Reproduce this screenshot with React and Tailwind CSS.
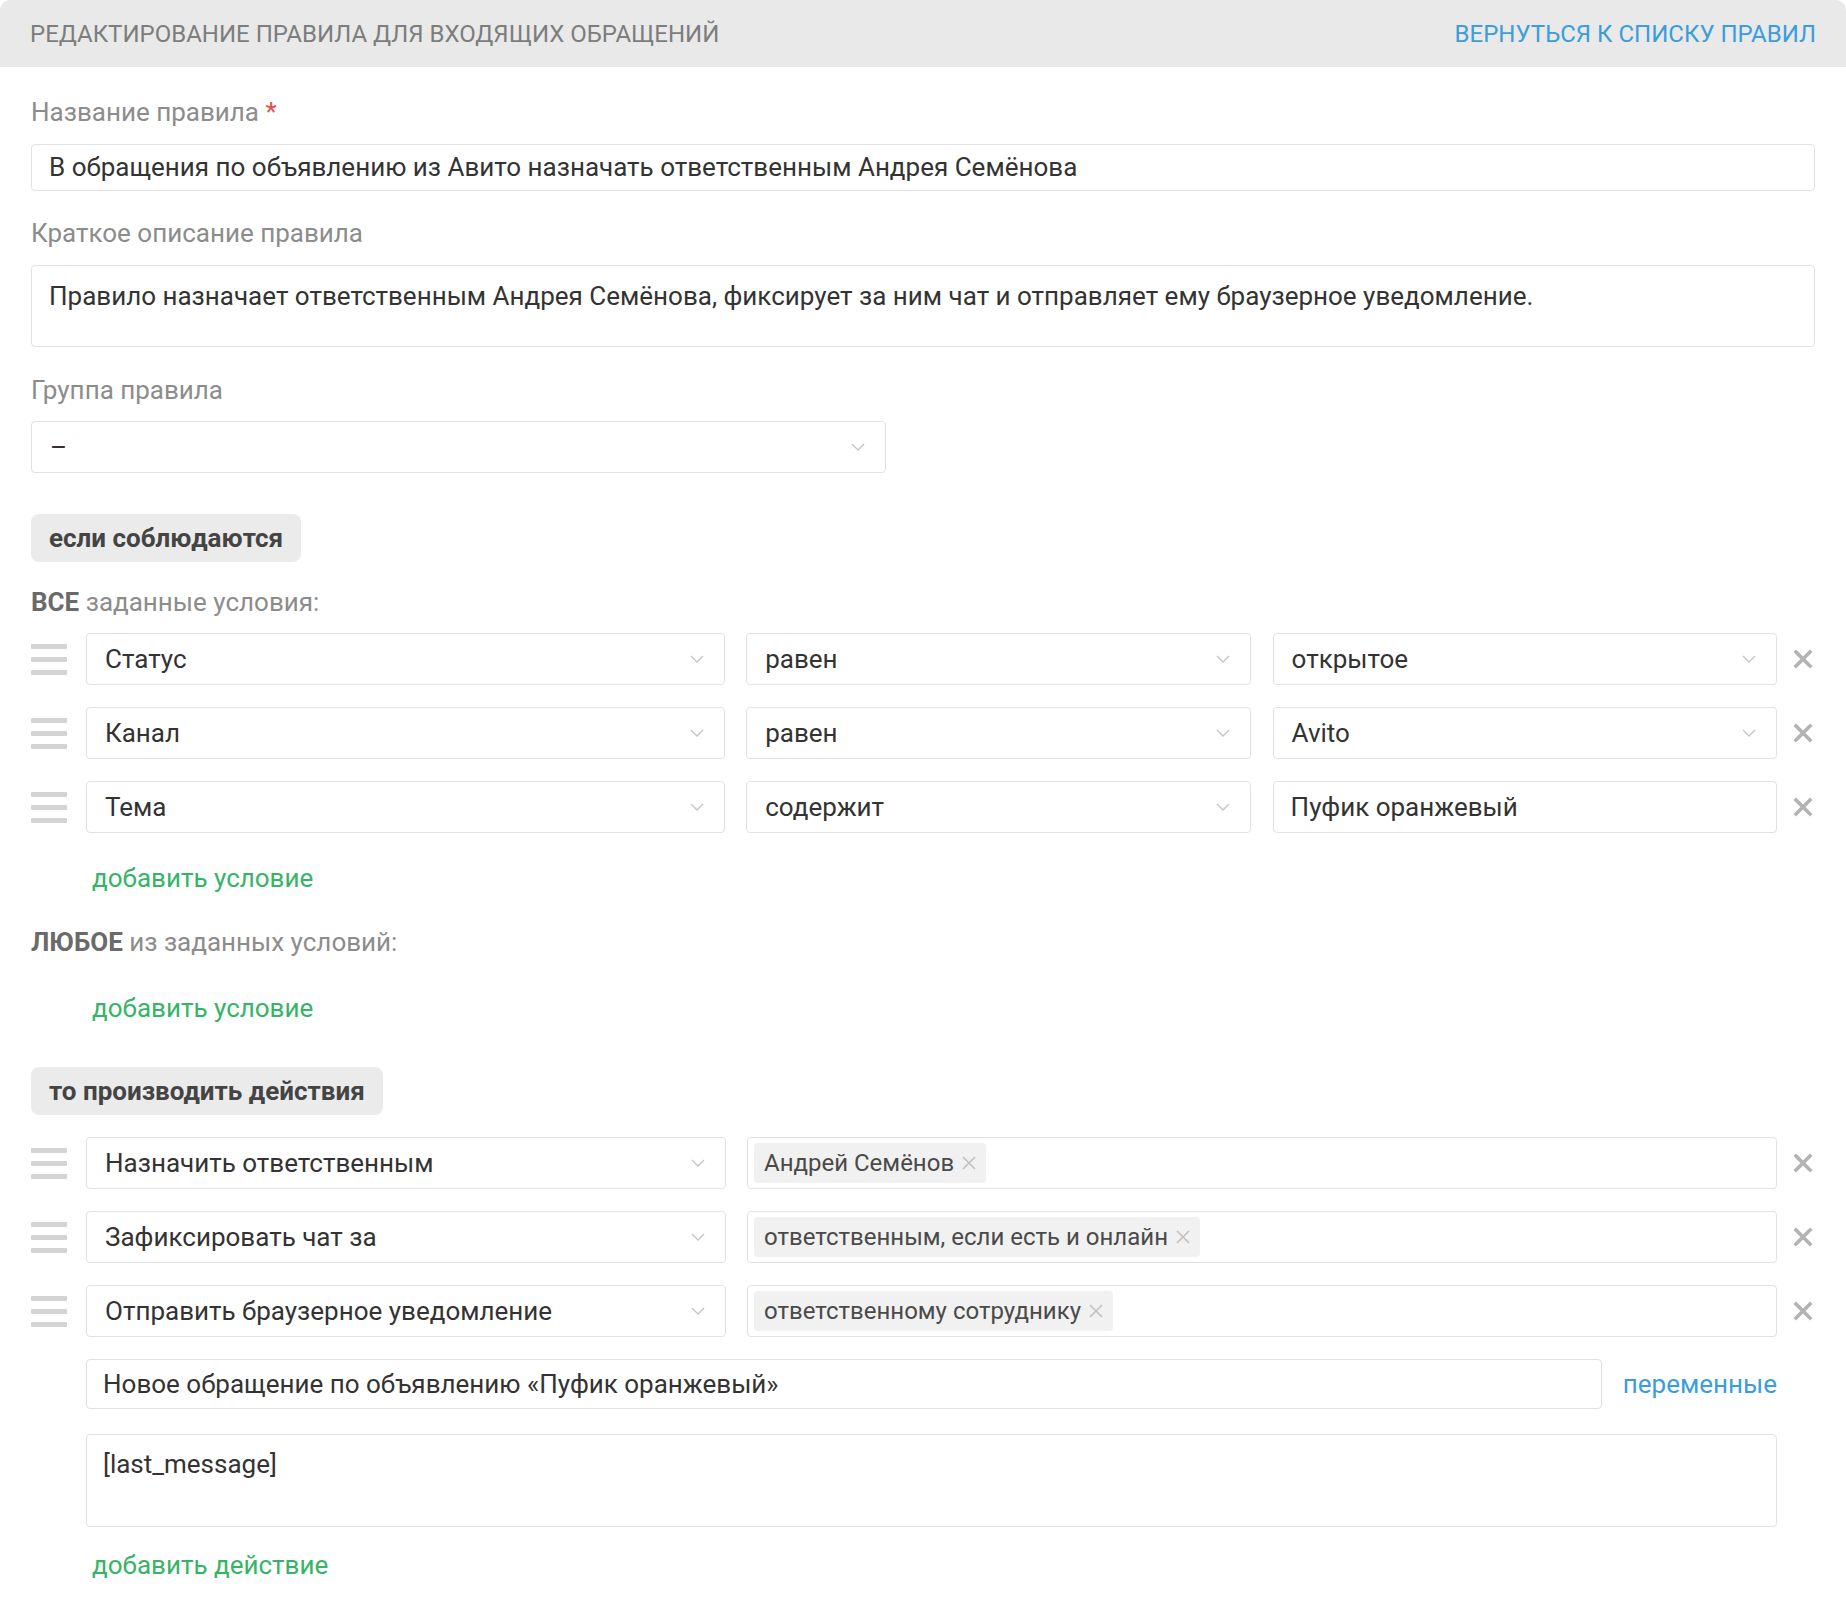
import { useState } from "react";

// Rule editor for incoming requests: name, description, group, conditions and actions

function Chevron() {
  return (
    <svg width="14" height="8" viewBox="0 0 14 8" className="shrink-0">
      <polyline points="1,1 7,7 13,1" fill="none" stroke="#c4c4c4" strokeWidth="1.3" />
    </svg>
  );
}

function DragHandle() {
  return (
    <div className="w-[36px] shrink-0 flex flex-col gap-[8px] cursor-move">
      <div className="h-[5px] bg-[#d4d4d4] rounded-[1px]" />
      <div className="h-[5px] bg-[#d4d4d4] rounded-[1px]" />
      <div className="h-[5px] bg-[#d4d4d4] rounded-[1px]" />
    </div>
  );
}

function RemoveButton() {
  return (
    <button className="w-[38px] shrink-0 flex justify-end pr-[2px]">
      <svg width="20" height="20" viewBox="0 0 20 20">
        <path d="M3 3 L17 17 M17 3 L3 17" stroke="#b3b3b3" strokeWidth="3.6" strokeLinecap="square" />
      </svg>
    </button>
  );
}

function Select({ value, className = "" }) {
  return (
    <div
      className={`h-[52px] border border-[#e2e2e2] rounded-[4px] bg-white flex items-center justify-between pl-[18px] pr-[20px] text-[26px] text-[#333] ${className}`}
    >
      <span>{value}</span>
      <Chevron />
    </div>
  );
}

function TextField({ value, className = "" }) {
  return (
    <div
      className={`h-[52px] border border-[#e2e2e2] rounded-[4px] bg-white flex items-center px-[17px] text-[26px] text-[#333] ${className}`}
    >
      {value}
    </div>
  );
}

function TagInput({ tags }) {
  return (
    <div className="flex-1 h-[52px] border border-[#e2e2e2] rounded-[4px] bg-white flex items-center px-[6px] gap-[6px]">
      {tags.map((t) => (
        <span
          key={t}
          className="h-[40px] bg-[#f1f1f1] rounded-[4px] flex items-center gap-[8px] pl-[10px] pr-[10px] text-[24px] text-[#4a4a4a]"
        >
          {t}
          <svg width="14" height="14" viewBox="0 0 14 14">
            <path d="M1 1 L13 13 M13 1 L1 13" stroke="#c2c2c2" strokeWidth="1.7" />
          </svg>
        </span>
      ))}
    </div>
  );
}

function SectionPill({ children }) {
  return (
    <div className="inline-flex items-center h-[48px] px-[18px] bg-[#ebebeb] rounded-[8px] text-[26px] font-bold text-[#444]">
      {children}
    </div>
  );
}

function Label({ children }) {
  return <div className="text-[26px] leading-[26px] text-[#8c8c8c]">{children}</div>;
}

function AddLink({ children }) {
  return (
    <div className="pl-[61px] text-[26px] leading-[26px] text-[#35b466] cursor-pointer">{children}</div>
  );
}

export default function App() {
  const [conditions] = useState([
    { field: "Статус", op: "равен", value: "открытое", select: true },
    { field: "Канал", op: "равен", value: "Avito", select: true },
    { field: "Тема", op: "содержит", value: "Пуфик оранжевый", select: false },
  ]);

  const actions = [
    { type: "Назначить ответственным", tags: ["Андрей Семёнов"] },
    { type: "Зафиксировать чат за", tags: ["ответственным, если есть и онлайн"] },
    { type: "Отправить браузерное уведомление", tags: ["ответственному сотруднику"] },
  ];

  return (
    <div className="w-[1846px] min-h-[1612px] bg-white font-['Roboto',sans-serif]">
      {/* Header */}
      <div className="h-[67px] bg-[#e9e9e9] rounded-t-[10px] flex items-center justify-between px-[30px]">
        <div className="text-[24px] uppercase text-[#7d7d7d]">
          Редактирование правила для входящих обращений
        </div>
        <a className="text-[24px] uppercase text-[#3b9dd9] cursor-pointer">
          Вернуться к списку правил
        </a>
      </div>

      <div className="px-[31px] pt-[32px] pb-[30px]">
        <Label>
          Название правила <span className="text-[#e84c4c]">*</span>
        </Label>
        <div className="mt-[19px] h-[47px] border border-[#e2e2e2] rounded-[4px] flex items-center px-[17px] text-[26px] text-[#333]">
          В обращения по объявлению из Авито назначать ответственным Андрея Семёнова
        </div>

        <div className="mt-[29px]">
          <Label>Краткое описание правила</Label>
        </div>
        <div className="mt-[19px] h-[82px] border border-[#e2e2e2] rounded-[4px] px-[17px] pt-[11px] text-[26px] leading-[38px] text-[#333]">
          Правило назначает ответственным Андрея Семёнова, фиксирует за ним чат и отправляет ему браузерное уведомление.
        </div>

        <div className="mt-[30px]">
          <Label>Группа правила</Label>
        </div>
        <div className="mt-[18px] w-[855px]">
          <Select value="–" />
        </div>

        {/* Conditions */}
        <div className="mt-[41px]">
          <SectionPill>если соблюдаются</SectionPill>
        </div>

        <div className="mt-[27px]">
          <Label>
            <span className="font-bold text-[#6a6a6a]">ВСЕ</span> заданные условия:
          </Label>
        </div>

        <div className="mt-[18px] flex flex-col gap-[22px]">
          {conditions.map((c) => (
            <div key={c.field} className="flex items-center">
              <DragHandle />
              <Select value={c.field} className="ml-[19px] w-[640px]" />
              <Select value={c.op} className="ml-[21px] w-[505px]" />
              {c.select ? (
                <Select value={c.value} className="ml-[22px] w-[505px]" />
              ) : (
                <TextField value={c.value} className="ml-[22px] w-[505px]" />
              )}
              <RemoveButton />
            </div>
          ))}
        </div>

        <div className="mt-[32px]">
          <AddLink>добавить условие</AddLink>
        </div>

        <div className="mt-[38px]">
          <Label>
            <span className="font-bold text-[#6a6a6a]">ЛЮБОЕ</span> из заданных условий:
          </Label>
        </div>

        <div className="mt-[40px]">
          <AddLink>добавить условие</AddLink>
        </div>

        {/* Actions */}
        <div className="mt-[46px]">
          <SectionPill>то производить действия</SectionPill>
        </div>

        <div className="mt-[22px] flex flex-col gap-[22px]">
          {actions.map((a) => (
            <div key={a.type} className="flex items-center">
              <DragHandle />
              <Select value={a.type} className="ml-[19px] w-[640px]" />
              <div className="ml-[21px] flex-1 flex">
                <TagInput tags={a.tags} />
              </div>
              <RemoveButton />
            </div>
          ))}
        </div>

        <div className="mt-[22px] pl-[55px] pr-[38px]">
          <div className="flex items-center">
            <div className="flex-1 h-[50px] border border-[#e2e2e2] rounded-[4px] flex items-center px-[16px] text-[26px] text-[#333]">
              Новое обращение по объявлению «Пуфик оранжевый»
            </div>
            <a className="ml-[21px] text-[26px] text-[#3b9dd9] cursor-pointer">переменные</a>
          </div>
          <div className="mt-[25px] h-[93px] border border-[#e2e2e2] rounded-[4px] px-[16px] pt-[10px] text-[26px] leading-[38px] text-[#333]">
            [last_message]
          </div>
        </div>

        <div className="mt-[25px]">
          <AddLink>добавить действие</AddLink>
        </div>
      </div>
    </div>
  );
}
